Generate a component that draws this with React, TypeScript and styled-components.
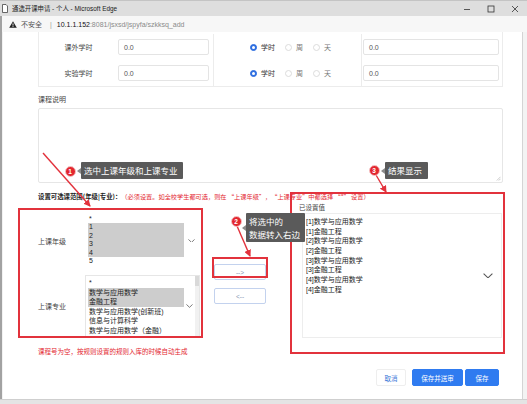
import React from 'react';
import styled, { createGlobalStyle } from 'styled-components';

const GlobalStyle = createGlobalStyle`
  html, body {
    margin: 0;
    padding: 0;
    background: #fff;
  }
  body {
    font-family: "Liberation Sans", "Noto Sans CJK SC", sans-serif;
  }
  * {
    box-sizing: border-box;
  }
`;

const RED = '#e2323c';

const Window = styled.div`
  position: relative;
  width: 527px;
  height: 404px;
  display: flex;
  flex-direction: column;
  overflow: hidden;
  background: #fff;
`;

const TitleBar = styled.div`
  height: 16px;
  flex: none;
  display: flex;
  align-items: center;
  background: #dedede;
  border-top: 1px solid #c4c4c4;
  padding-left: 2px;
  font-size: 6.4px;
  color: #222;
`;

const TitleText = styled.span`
  margin-left: 4px;
  white-space: nowrap;
`;

const WinControls = styled.div`
  margin-left: auto;
  display: flex;
  height: 100%;
`;

const WinButton = styled.div`
  width: 24px;
  height: 100%;
  display: flex;
  align-items: center;
  justify-content: center;
`;

const AddressBar = styled.div`
  height: 16px;
  flex: none;
  display: flex;
  align-items: center;
  background: #f7f7f7;
  border-left: 2px solid #a2a2a2;
  padding-left: 7px;
  font-size: 7px;
  white-space: nowrap;
`;

const Insecure = styled.span`
  margin-left: 4px;
  color: #555;
`;

const Divider = styled.span`
  margin: 0 5px 0 8px;
  color: #999;
`;

const Host = styled.span`
  color: #111;
`;

const Path = styled.span`
  color: #8a8a8a;
`;

const Main = styled.div`
  flex: 1;
  display: flex;
  min-height: 0;
`;

const LeftEdge = styled.div`
  width: 3px;
  flex: none;
  border-left: 2px solid #a2a2a2;
  background: #f2f2f2;
`;

const RightEdge = styled.div`
  width: 5px;
  flex: none;
  border-left: 1px solid #d4d4d4;
  background: #f3f3f3;
`;

const BottomEdge = styled.div`
  height: 5px;
  flex: none;
  background: #e4e4e4;
  border-top: 1px solid #cfcfcf;
`;

const Page = styled.div`
  flex: 1;
  display: flex;
  flex-direction: column;
  padding: 0 19px 0 15px;
  overflow: hidden;
  color: #444;
  font-family: "Liberation Sans", "Noto Sans CJK SC", sans-serif;
`;

const InfoCard = styled.div`
  margin-left: 20px;
  padding-top: 2px;
  border: 1px solid #ececec;
  border-top: none;
  display: grid;
  grid-template-columns: 174px 148px 1fr;
  grid-auto-rows: 26px;
`;

const Cell = styled.div<{ $divided?: boolean; $pad?: number }>`
  display: flex;
  align-items: center;
  padding-left: ${p => p.$pad ?? 0}px;
  border-left: ${p => (p.$divided ? '1px solid #ececec' : 'none')};
`;

const CellLabel = styled.div`
  width: 79px;
  text-align: center;
  font-size: 7px;
  color: #444;
`;

const Input = styled.div<{ $w: number }>`
  width: ${p => p.$w}px;
  height: 16px;
  border: 1px solid #e4e4e4;
  border-radius: 2px;
  padding-left: 5px;
  display: flex;
  align-items: center;
  font-size: 7px;
  color: #555;
`;

const RadioItem = styled.div`
  display: flex;
  align-items: center;
  gap: 4px;
  margin-right: 10px;
  font-size: 7px;
`;

const RadioDot = styled.span<{ $on?: boolean }>`
  width: 7px;
  height: 7px;
  border-radius: 50%;
  display: flex;
  align-items: center;
  justify-content: center;
  background: ${p => (p.$on ? '#2f6fe0' : '#fff')};
  border: 1px solid ${p => (p.$on ? '#2f6fe0' : '#dcdcdc')};

  &::after {
    content: '';
    width: 3px;
    height: 3px;
    border-radius: 50%;
    background: ${p => (p.$on ? '#fff' : 'transparent')};
  }
`;

const RadioText = styled.span<{ $on?: boolean }>`
  color: ${p => (p.$on ? '#333' : '#777')};
`;

const SectionLabel = styled.div`
  margin: 9px 0 4px 20px;
  font-size: 7px;
  line-height: 8px;
  color: #444;
`;

const TextArea = styled.div`
  margin-left: 20px;
  height: 75px;
  flex: none;
  border: 1px solid #e6e6e6;
  border-radius: 2px;
  display: flex;
  align-items: flex-end;
  justify-content: flex-end;
  padding: 0 1px 1px 0;
`;

const Hint = styled.div`
  margin: 5px 0 2px 20px;
  line-height: 8px;
  white-space: nowrap;
  font-family: "Noto Sans CJK SC", sans-serif;
`;

const HintStrong = styled.span`
  font-size: 6.4px;
  font-weight: bold;
  color: #222;
`;

const HintRed = styled.span`
  margin-left: 3px;
  font-size: 6.2px;
  color: #e3262f;
`;

const RangeSection = styled.div`
  margin-left: 20px;
  height: 135px;
  flex: none;
  display: grid;
  grid-template-columns: 165px 88px 1fr;
`;

const LeftCol = styled.div`
  display: flex;
  flex-direction: column;
  gap: 8px;
  padding-top: 11px;
`;

const SelectRow = styled.div`
  display: flex;
  align-items: center;
`;

const FieldLabel = styled.div`
  width: 47px;
  font-size: 7px;
  color: #444;
`;

const ListBox = styled.div<{ $w: number; $h: number; $framed?: boolean }>`
  width: ${p => p.$w}px;
  height: ${p => p.$h}px;
  display: flex;
  overflow: hidden;
  border: 1px solid ${p => (p.$framed ? '#e6e6e6' : 'transparent')};
  background: #fff;
`;

const OptionList = styled.div<{ $top: number }>`
  flex: 1;
  padding: ${p => p.$top}px 0 0 2px;
  overflow: hidden;
`;

const Option = styled.div<{ $lh: number; $selected?: boolean }>`
  height: ${p => p.$lh}px;
  line-height: ${p => p.$lh}px;
  font-size: 7px;
  color: #222;
  padding-left: 1px;
  white-space: nowrap;
  background: ${p => (p.$selected ? '#cdcdcd' : 'transparent')};
`;

const ArrowSlot = styled.div<{ $w: number }>`
  width: ${p => p.$w}px;
  flex: none;
  display: flex;
  align-items: center;
  justify-content: center;
`;

const ScrollTrack = styled.div`
  width: 4px;
  flex: none;
  background: #f1f1f1;
  display: flex;
  flex-direction: column;
`;

const ScrollThumb = styled.div`
  height: 10px;
  background: #d9d9d9;
`;

const MidCol = styled.div`
  display: flex;
  flex-direction: column;
  gap: 8px;
  padding: 61px 0 0 11px;
`;

const MoveButton = styled.div`
  width: 52px;
  height: 16px;
  border: 1px solid #c3d2ee;
  border-radius: 2px;
  display: flex;
  align-items: center;
  justify-content: center;
  font-size: 6.5px;
  color: #8797b4;
`;

const RightCol = styled.div`
  display: flex;
  flex-direction: column;
`;

const ValueLabel = styled.div`
  padding-left: 8px;
  line-height: 10px;
  font-size: 6.5px;
  color: #444;
`;

const ValueList = styled.div`
  margin-left: 11px;
  width: 200px;
  height: 125px;
  border: 1px solid #ededed;
  display: flex;
`;

const Note = styled.div`
  margin: 10px 0 0 20px;
  font-size: 6.5px;
  line-height: 8px;
  color: #e3262f;
`;

const Actions = styled.div`
  margin-top: 13px;
  padding-right: 4px;
  display: flex;
  justify-content: flex-end;
  gap: 2px;
`;

const ActionButton = styled.div<{ $w: number; $primary?: boolean }>`
  width: ${p => p.$w}px;
  height: 17px;
  margin-right: ${p => (p.$primary ? 0 : 4)}px;
  border-radius: 2px;
  display: flex;
  align-items: center;
  justify-content: center;
  font-size: 6.5px;
  color: ${p => (p.$primary ? '#fff' : '#3b78d8')};
  background: ${p => (p.$primary ? '#2f7bf0' : '#fff')};
  border: 1px solid ${p => (p.$primary ? '#2f7bf0' : '#eeeeee')};
`;

/* ---- annotation overlays (drawn on top of the screenshot) ---- */

const MarkBox = styled.div<{ $x: number; $y: number; $w: number; $h: number }>`
  position: absolute;
  left: ${p => p.$x}px;
  top: ${p => p.$y}px;
  width: ${p => p.$w}px;
  height: ${p => p.$h}px;
  border: 2px solid ${RED};
  pointer-events: none;
`;

const Badge = styled.div<{ $x: number; $y: number }>`
  position: absolute;
  left: ${p => p.$x}px;
  top: ${p => p.$y}px;
  width: 11px;
  height: 11px;
  border-radius: 50%;
  background: #e3262f;
  border: 1px solid #f6c6c8;
  color: #fff;
  font-size: 6.5px;
  font-weight: bold;
  display: flex;
  align-items: center;
  justify-content: center;
`;

const Callout = styled.div<{ $x: number; $y: number; $w: number; $h: number }>`
  position: absolute;
  left: ${p => p.$x}px;
  top: ${p => p.$y}px;
  width: ${p => p.$w}px;
  height: ${p => p.$h}px;
  background: #5a5a5a;
  border-radius: 1px;
  color: #fff;
  font-family: "Noto Sans CJK SC", sans-serif;
  font-size: 8.5px;
  line-height: 12.5px;
  padding: 2px 0 0 3px;
  white-space: nowrap;

  &::before {
    content: '';
    position: absolute;
    left: -4px;
    top: 50%;
    margin-top: -3px;
    border-top: 3px solid transparent;
    border-bottom: 3px solid transparent;
    border-right: 4px solid #8a8a8a;
  }
`;

const ArrowLayer = styled.svg`
  position: absolute;
  left: 0;
  top: 0;
  pointer-events: none;
`;

const Chevron = ({ w = 7 }: { w?: number }) => (
  <svg width={w} height={w * 0.55} viewBox="0 0 10 5.5">
    <path d="M0.6 0.6 L5 4.8 L9.4 0.6" fill="none" stroke="#555" strokeWidth="1.1" />
  </svg>
);

const yearOptions = [
  { v: '*', s: false },
  { v: '1', s: true },
  { v: '2', s: true },
  { v: '3', s: true },
  { v: '4', s: true },
  { v: '5', s: false },
];

const majorOptions = [
  { v: '*', s: false },
  { v: '数学与应用数学', s: true },
  { v: '金融工程', s: true },
  { v: '数学与应用数学(创新班)', s: false },
  { v: '信息与计算科学', s: false },
  { v: '数学与应用数学（金融）', s: false },
];

const setValues = [
  '[1]数学与应用数学',
  '[1]金融工程',
  '[2]数学与应用数学',
  '[2]金融工程',
  '[3]数学与应用数学',
  '[3]金融工程',
  '[4]数学与应用数学',
  '[4]金融工程',
];

const hourRows = ['课外学时', '实验学时'];

const App: React.FC = () => {
  return (
    <>
      <GlobalStyle />
      <Window>
        <TitleBar>
          <svg width="6" height="9" viewBox="0 0 6 9">
            <path d="M0.5 0.5 H4 L5.5 2 V8.5 H0.5 Z" fill="#fff" stroke="#444" strokeWidth="0.8" />
          </svg>
          <TitleText>通选开课申请 - 个人 - Microsoft Edge</TitleText>
          <WinControls>
            <WinButton>
              <svg width="8" height="8" viewBox="0 0 8 8">
                <path d="M1 4.5 H7" stroke="#333" strokeWidth="0.8" />
              </svg>
            </WinButton>
            <WinButton>
              <svg width="8" height="8" viewBox="0 0 8 8">
                <rect x="1" y="1" width="6" height="6" fill="none" stroke="#333" strokeWidth="0.8" />
              </svg>
            </WinButton>
            <WinButton>
              <svg width="8" height="8" viewBox="0 0 8 8">
                <path d="M1 1 L7 7 M7 1 L1 7" stroke="#333" strokeWidth="0.8" />
              </svg>
            </WinButton>
          </WinControls>
        </TitleBar>

        <AddressBar>
          <svg width="8" height="7" viewBox="0 0 8 7">
            <path d="M4 0.2 L7.8 6.8 H0.2 Z" fill="#222" />
            <path d="M4 2.4 V4.6" stroke="#fff" strokeWidth="0.9" />
            <circle cx="4" cy="5.6" r="0.5" fill="#fff" />
          </svg>
          <Insecure>不安全</Insecure>
          <Divider>|</Divider>
          <Host>10.1.1.152</Host>
          <Path>:8081/jsxsd/jspyfa/szkksq_add</Path>
        </AddressBar>

        <Main>
          <LeftEdge />
          <Page>
            <InfoCard>
              {hourRows.map(label => (
                <React.Fragment key={label}>
                  <Cell>
                    <CellLabel>{label}</CellLabel>
                    <Input $w={91}>0.0</Input>
                  </Cell>
                  <Cell $divided $pad={36}>
                    <RadioItem>
                      <RadioDot $on />
                      <RadioText $on>学时</RadioText>
                    </RadioItem>
                    <RadioItem>
                      <RadioDot />
                      <RadioText>周</RadioText>
                    </RadioItem>
                    <RadioItem>
                      <RadioDot />
                      <RadioText>天</RadioText>
                    </RadioItem>
                  </Cell>
                  <Cell $divided $pad={1}>
                    <Input $w={136}>0.0</Input>
                  </Cell>
                </React.Fragment>
              ))}
            </InfoCard>

            <SectionLabel>课程说明</SectionLabel>
            <TextArea>
              <svg width="5" height="5" viewBox="0 0 5 5">
                <path d="M4.5 0.8 L0.8 4.5 M4.5 2.8 L2.8 4.5" stroke="#aaa" strokeWidth="0.6" />
              </svg>
            </TextArea>

            <Hint>
              <HintStrong>设置可选课范围(年级|专业)：</HintStrong>
              <HintRed>（必须设置。如全校学生都可选，则在 “上课年级”，“上课专业”中都选择 “*” 设置）</HintRed>
            </Hint>

            <RangeSection>
              <LeftCol>
                <SelectRow>
                  <FieldLabel>上课年级</FieldLabel>
                  <ListBox $w={115} $h={53}>
                    <OptionList $top={0}>
                      {yearOptions.map(o => (
                        <Option key={o.v} $lh={8.4} $selected={o.s}>
                          {o.v}
                        </Option>
                      ))}
                    </OptionList>
                    <ArrowSlot $w={15}>
                      <Chevron />
                    </ArrowSlot>
                  </ListBox>
                </SelectRow>
                <SelectRow>
                  <FieldLabel>上课专业</FieldLabel>
                  <ListBox $w={115} $h={62} $framed>
                    <OptionList $top={2}>
                      {majorOptions.map(o => (
                        <Option key={o.v} $lh={9.6} $selected={o.s}>
                          {o.v}
                        </Option>
                      ))}
                    </OptionList>
                    <ArrowSlot $w={11}>
                      <Chevron />
                    </ArrowSlot>
                    <ScrollTrack>
                      <ScrollThumb />
                    </ScrollTrack>
                  </ListBox>
                </SelectRow>
              </LeftCol>

              <MidCol>
                <MoveButton>--&gt;</MoveButton>
                <MoveButton>&lt;--</MoveButton>
              </MidCol>

              <RightCol>
                <ValueLabel>已设置值</ValueLabel>
                <ValueList>
                  <OptionList $top={3}>
                    {setValues.map(v => (
                      <Option key={v} $lh={9.7}>
                        {v}
                      </Option>
                    ))}
                  </OptionList>
                  <ArrowSlot $w={26}>
                    <Chevron w={10} />
                  </ArrowSlot>
                </ValueList>
              </RightCol>
            </RangeSection>

            <Note>课程号为空，按规则设置的规则入库的时候自动生成</Note>

            <Actions>
              <ActionButton $w={30}>取消</ActionButton>
              <ActionButton $w={51} $primary>
                保存并送审
              </ActionButton>
              <ActionButton $w={34} $primary>
                保存
              </ActionButton>
            </Actions>
          </Page>
          <RightEdge />
        </Main>
        <BottomEdge />

        <MarkBox $x={18} $y={208} $w={185} $h={130} />
        <MarkBox $x={290} $y={192} $w={215} $h={162} />
        <MarkBox $x={212} $y={257} $w={56} $h={21} />

        <ArrowLayer width="527" height="404" viewBox="0 0 527 404">
          <defs>
            <marker id="head" markerWidth="7" markerHeight="7" refX="6" refY="3.5" orient="auto" markerUnits="userSpaceOnUse">
              <path d="M0 0 L7 3.5 L0 7 Z" fill={RED} />
            </marker>
          </defs>
          <line x1="43" y1="153" x2="90" y2="206" stroke={RED} strokeWidth="1.4" markerEnd="url(#head)" />
          <line x1="237" y1="226" x2="250" y2="256" stroke={RED} strokeWidth="1.4" markerEnd="url(#head)" />
          <line x1="376" y1="175" x2="386" y2="192" stroke={RED} strokeWidth="1.4" markerEnd="url(#head)" />
        </ArrowLayer>

        <Badge $x={64.5} $y={165.5}>1</Badge>
        <Callout $x={81} $y={162} $w={102} $h={17}>选中上课年级和上课专业</Callout>

        <Badge $x={230.5} $y={215.5}>2</Badge>
        <Callout $x={246} $y={213} $w={59} $h={29}>
          将选中的
          <br />
          数据转入右边
        </Callout>

        <Badge $x={368.5} $y={164.5}>3</Badge>
        <Callout $x={385} $y={162} $w={43} $h={17}>结果显示</Callout>
      </Window>
    </>
  );
};

export default App;
